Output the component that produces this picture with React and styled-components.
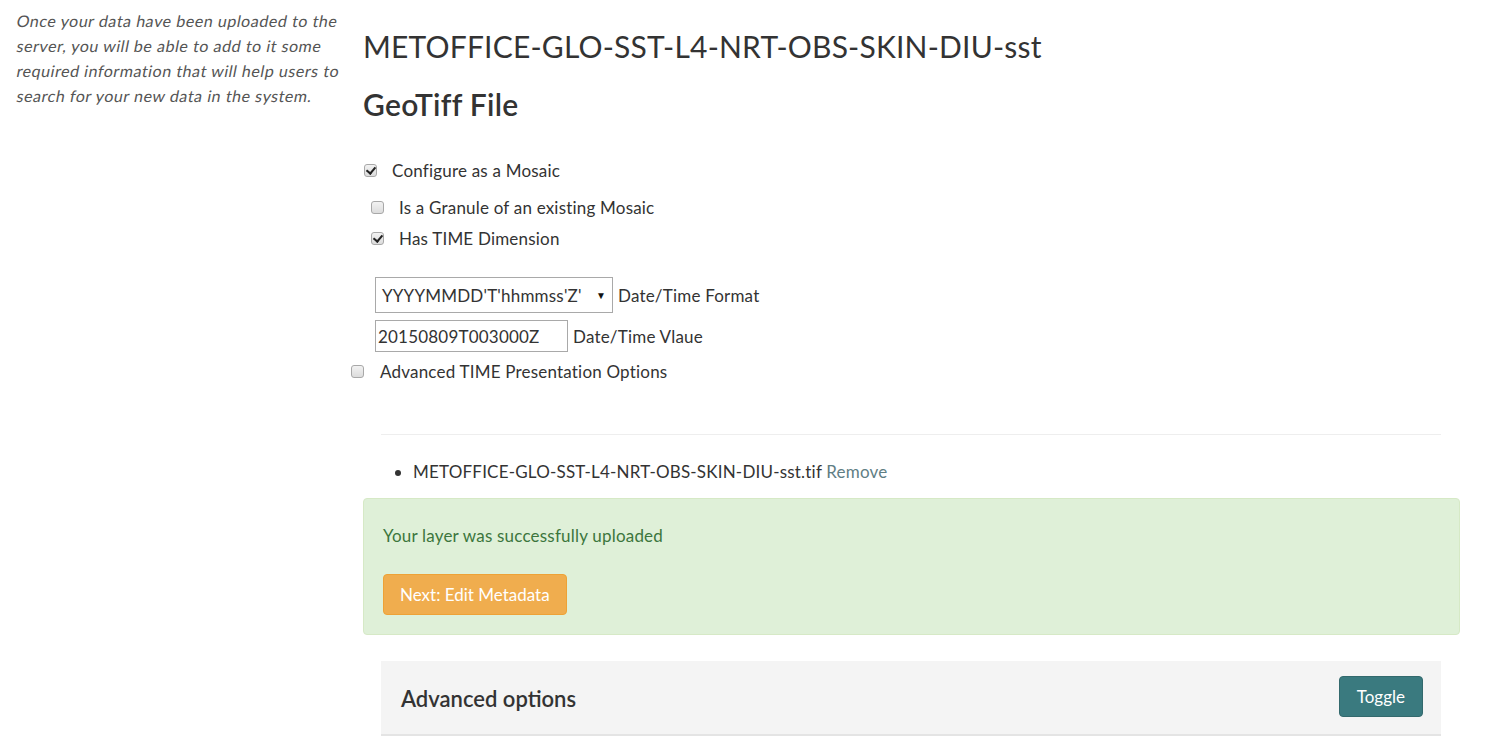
import React from "react";
import styled, { createGlobalStyle } from "styled-components";

const GlobalStyle = createGlobalStyle`
  html, body {
    margin: 0;
    padding: 0;
    background: #fff;
  }
  body {
    font-family: Lato, "Open Sans", "Liberation Sans", sans-serif;
    font-size: 17px;
    letter-spacing: 0.2px;
    color: #333;
  }
`;

const Page = styled.div`
  display: flex;
  align-items: flex-start;
  width: 1487px;
  min-height: 746px;
  overflow: hidden;
`;

const Sidebar = styled.aside`
  flex: 0 0 346px;
  padding: 8px 0 0 17px;
  box-sizing: border-box;
  font-size: 16px;
  letter-spacing: 0.55px;
  line-height: 25px;
  color: #555;
`;

// the original shows a slanted regular face, so each line is skewed
const SlantLine = styled.span`
  display: block;
  white-space: nowrap;
  transform: skewX(-11deg);
  transform-origin: left center;
`;

const Main = styled.main`
  flex: 1;
  padding: 0 27px 0 17px;
`;

const Title = styled.h1`
  margin: 30px 0 0;
  font-size: 30px;
  line-height: 32px;
  font-weight: 400;
  color: #333;
`;

const SubTitle = styled.h2`
  margin: 26px 0 0;
  font-size: 30px;
  line-height: 32px;
  font-weight: 600;
  letter-spacing: 0.3px;
  color: #333;
`;

const CheckRow = styled.label`
  display: flex;
  align-items: center;
  gap: ${(p) => p.$gap || 15}px;
  height: 24px;
  margin: ${(p) => p.$top}px 0 0 ${(p) => p.$indent}px;
`;

const Check = styled.input.attrs({ type: "checkbox" })`
  appearance: none;
  margin: 0;
  width: 13px;
  height: 13px;
  box-sizing: border-box;
  border: 1px solid #a8a8a8;
  border-radius: 3px;
  background: linear-gradient(#f2f2f2, #dcdcdc);
  position: relative;
  flex: 0 0 auto;

  &:checked::after {
    content: "";
    position: absolute;
    left: 3px;
    top: 0px;
    width: 4px;
    height: 7px;
    border: solid #222;
    border-width: 0 2px 2px 0;
    transform: rotate(40deg);
  }
`;

const FieldRow = styled.div`
  display: flex;
  align-items: center;
  gap: 5px;
  margin: ${(p) => p.$top}px 0 0 12px;
`;

const SelectBox = styled.div`
  display: flex;
  align-items: center;
  justify-content: space-between;
  width: 238px;
  height: 36px;
  box-sizing: border-box;
  border: 1px solid #a9a9a9;
  padding: 0 6px 0 6px;
  color: #333;
  background: #fff;
`;

const Caret = styled.span`
  font-size: 10px;
  color: #111;
`;

const TextBox = styled.input`
  width: 193px;
  height: 32px;
  box-sizing: border-box;
  border: 1px solid #a9a9a9;
  padding: 0 2px;
  margin: 0;
  font-family: inherit;
  font-size: 17px;
  letter-spacing: 0.2px;
  color: #333;
`;

const Inner = styled.div`
  margin: 0 19px 0 18px;
`;

const Rule = styled.hr`
  margin: 51px 0 0;
  border: 0;
  border-top: 1px solid #eee;
`;

const FileList = styled.ul`
  margin: 25px 0 0;
  padding-left: 32px;
  line-height: 24px;
`;

const RemoveLink = styled.a`
  color: #5f7e84;
  text-decoration: none;
`;

const Alert = styled.div`
  margin-top: 14px;
  height: 137px;
  box-sizing: border-box;
  padding: 25px 19px 0;
  background: #dff0d8;
  border: 1px solid #d6e9c6;
  border-radius: 4px;
  color: #3c763d;
  line-height: 24px;
`;

const Button = styled.button`
  display: inline-flex;
  align-items: center;
  height: 41px;
  padding: 0 ${(p) => p.$pad}px;
  border: 1px solid ${(p) => p.$border};
  border-radius: 4px;
  background: ${(p) => p.$bg};
  color: #fff;
  font-family: inherit;
  font-size: 17px;
  letter-spacing: 0;
  cursor: pointer;
`;

const AlertAction = styled.div`
  margin-top: 26px;
`;

const Panel = styled.div`
  display: flex;
  align-items: center;
  justify-content: space-between;
  margin-top: 26px;
  height: 75px;
  box-sizing: border-box;
  padding: 0 18px 2px 20px;
  background: #f4f4f4;
  border-bottom: 2px solid #e4e4e4;
`;

const PanelTitle = styled.h3`
  margin: 4px 0 0;
  font-size: 22px;
  font-weight: 600;
  letter-spacing: 0;
  color: #333;
`;

const sidebarLines = [
  "Once your data have been uploaded to the",
  "server, you will be able to add to it some",
  "required information that will help users to",
  "search for your new data in the system.",
];

export default function App() {
  return (
    <>
      <GlobalStyle />
      <Page>
        <Sidebar>
          {sidebarLines.map((line) => (
            <SlantLine key={line}>{line}</SlantLine>
          ))}
        </Sidebar>
        <Main>
          <Title>METOFFICE-GLO-SST-L4-NRT-OBS-SKIN-DIU-sst</Title>
          <SubTitle>GeoTiff File</SubTitle>

          <CheckRow $top={38} $indent={1}>
            <Check defaultChecked />
            Configure as a Mosaic
          </CheckRow>
          <CheckRow $top={13} $indent={8}>
            <Check />
            Is a Granule of an existing Mosaic
          </CheckRow>
          <CheckRow $top={7} $indent={8}>
            <Check defaultChecked />
            Has TIME Dimension
          </CheckRow>

          <FieldRow $top={27}>
            <SelectBox>
              YYYYMMDD'T'hhmmss'Z'
              <Caret>▼</Caret>
            </SelectBox>
            Date/Time Format
          </FieldRow>
          <FieldRow $top={7}>
            <TextBox defaultValue="20150809T003000Z" />
            Date/Time Vlaue
          </FieldRow>

          <CheckRow $top={7} $indent={-12} $gap={16}>
            <Check />
            Advanced TIME Presentation Options
          </CheckRow>

          <Inner>
            <Rule />
            <FileList>
              <li>
                METOFFICE-GLO-SST-L4-NRT-OBS-SKIN-DIU-sst.tif{" "}
                <RemoveLink href="#">Remove</RemoveLink>
              </li>
            </FileList>
          </Inner>

          <Alert>
            Your layer was successfully uploaded
            <AlertAction>
              <Button $bg="#f0ad4e" $border="#eea236" $pad={16}>
                Next: Edit Metadata
              </Button>
            </AlertAction>
          </Alert>

          <Inner>
            <Panel>
              <PanelTitle>Advanced options</PanelTitle>
              <Button $bg="#3a7a7f" $border="#33696d" $pad={17}>
                Toggle
              </Button>
            </Panel>
          </Inner>
        </Main>
      </Page>
    </>
  );
}
